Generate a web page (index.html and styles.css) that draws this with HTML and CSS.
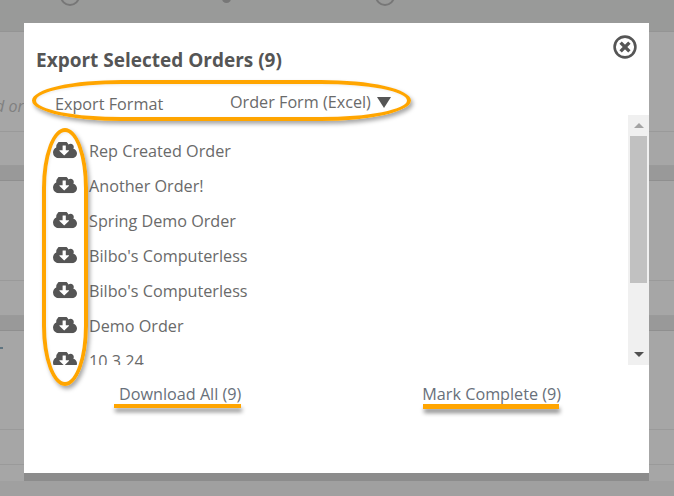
FILE: index.html
```html
<!DOCTYPE html>
<html lang="en">
<head>
<meta charset="utf-8">
<title>Export Selected Orders</title>
<link rel="stylesheet" href="styles.css">
</head>
<body>
<div class="backdrop">
  <div class="bg-top">
    <span class="bg-circle c1"></span>
    <span class="bg-circle c2"></span>
    <span class="bg-circle c3"></span>
  </div>
  <div class="bg-row r1"><span class="bg-note">d or</span></div>
  <div class="bg-row r2"></div>
  <div class="bg-band"></div>
  <div class="bg-row r3"></div>
  <div class="bg-row r4"></div>
  <div class="bg-band"></div>
  <div class="bg-row r5"><span class="bg-tick"></span></div>
  <div class="bg-row r6"></div>
  <div class="bg-row r7"></div>
  <div class="bg-foot"></div>
</div>

<div class="modal">
  <svg class="close" viewBox="0 0 24 24" aria-label="Close">
    <circle cx="12" cy="12" r="10.4" class="close-ring"/>
    <path d="M7.6 7.6l8.800 8.800M16.400 7.600l-8.800 8.800" class="close-x"/>
  </svg>

  <h2 class="title">Export Selected Orders (9)</h2>

  <div class="format">
    <span class="format-label">Export Format</span>
    <span class="format-value">Order Form (Excel)</span>
    <span class="caret"></span>
  </div>

  <div class="list-wrap">
    <ul class="list">
      <li class="item"><svg class="dl" viewBox="0 128 1920 1408"><use href="#cloud"/></svg><span>Rep Created Order</span></li>
      <li class="item"><svg class="dl" viewBox="0 128 1920 1408"><use href="#cloud"/></svg><span>Another Order!</span></li>
      <li class="item"><svg class="dl" viewBox="0 128 1920 1408"><use href="#cloud"/></svg><span>Spring Demo Order</span></li>
      <li class="item"><svg class="dl" viewBox="0 128 1920 1408"><use href="#cloud"/></svg><span>Bilbo's Computerless</span></li>
      <li class="item"><svg class="dl" viewBox="0 128 1920 1408"><use href="#cloud"/></svg><span>Bilbo's Computerless</span></li>
      <li class="item"><svg class="dl" viewBox="0 128 1920 1408"><use href="#cloud"/></svg><span>Demo Order</span></li>
      <li class="item"><svg class="dl" viewBox="0 128 1920 1408"><use href="#cloud"/></svg><span>10.3.24</span></li>
    </ul>
    <div class="scrollbar">
      <div class="arrow-btn"><span class="arrow-up"></span></div>
      <div class="track"><div class="thumb"></div></div>
      <div class="arrow-btn"><span class="arrow-down"></span></div>
    </div>
  </div>

  <div class="actions">
    <a class="action">Download All (9)</a>
    <a class="action">Mark Complete (9)</a>
  </div>

  <span class="mark oval-format"></span>
  <span class="mark oval-icons"></span>
  <span class="mark line-download"></span>
  <span class="mark line-complete"></span>
</div>

<svg class="defs" aria-hidden="true">
  <symbol id="cloud" viewBox="0 128 1920 1408">
    <path d="M1280 928q0-14-9-23t-23-9h-224v-352q0-13-9.500-22.500t-22.500-9.500h-192q-13 0-22.500 9.500t-9.500 22.500v352h-224q-14 0-23 9t-9 23q0 14 9 23l352 352q9 9 23 9t23-9l351-351q10-12 10-24zm640 224q0 159-112.500 271.500t-271.500 112.500h-1088q-185 0-316.500-131.500t-131.500-316.500q0-130 70-240t188-165q-2-30-2-43 0-212 150-362t362-150q156 0 285.500 87t188.500 231q71-62 166-62 106 0 181 75t75 181q0 76-41 138 130 31 213.500 135.500t83.500 238.500z"/>
  </symbol>
</svg>
</body>
</html>
```
FILE: styles.css
```css
* { box-sizing: border-box; }

html, body {
  margin: 0;
  height: 100%;
  overflow: hidden;
}

body {
  position: relative;
  width: 674px;
  height: 496px;
  background: #a5a5a5;
  font-family: "Open Sans", sans-serif;
  color: #555;
}

/* Dimmed page behind the dialog */
.backdrop {
  display: flex;
  flex-direction: column;
  height: 496px;
}

.bg-top {
  position: relative;
  height: 32px;
  flex: none;
  background: #999a99;
  border-bottom: 1px solid #949494;
}

.bg-circle {
  position: absolute;
  top: -14px;
  width: 20px;
  height: 20px;
  border: 2px solid #777;
  border-radius: 50%;
}
.c1 { left: 60px; }
.c2 { left: 222px; top: -6px; width: 9px; height: 9px; border: 0; background: #777; }
.c3 { left: 375px; }

.bg-row {
  flex: none;
  position: relative;
  background: #a6a6a6;
  border-bottom: 1px solid #9a9a9a;
}
.r1 { height: 100px; }
.r2 { height: 34px; }
.r3 { height: 100px; }
.r4 { height: 35px; }
.r5 { height: 99px; }
.r6 { height: 35px; }
.r7 { height: 16px; border-bottom: 0; }

.bg-band {
  flex: none;
  height: 15px;
  background: #999;
  border-bottom: 1px solid #8f8f8f;
}

.bg-note {
  position: absolute;
  left: -5px;
  top: 63px;
  font-size: 16px;
  font-style: italic;
  color: #808080;
}

.bg-tick {
  position: absolute;
  left: 0;
  top: 16px;
  width: 3px;
  height: 2px;
  background: #5f7480;
}

.bg-foot {
  flex: 1;
  background: #a0a0a0;
}

/* Dialog */
.modal {
  position: absolute;
  left: 24px;
  top: 23px;
  width: 625px;
  height: 450px;
  display: flex;
  flex-direction: column;
  background: #fff;
  box-shadow: 0 8px 0 #8c8c8c;
}

.close {
  position: absolute;
  right: 12px;
  top: 12px;
  width: 24px;
  height: 24px;
}
.close-ring { fill: none; stroke: #555; stroke-width: 2.6; }
.close-x { fill: none; stroke: #555; stroke-width: 3.4; }

.title {
  margin: 25px 0 0 12px;
  font-size: 19px;
  line-height: 25px;
  font-weight: 700;
  color: #555;
}

.format {
  display: flex;
  align-items: center;
  margin: 15px 0 0 31px;
  height: 28px;
  font-size: 16.200px;
}

.format-label { width: 175px; padding-top: 3px; color: #6a6a6a; }
.format-value { color: #6a6a6a; }

.caret {
  margin-left: 6px;
  border-left: 7px solid transparent;
  border-right: 7px solid transparent;
  border-top: 11px solid #555;
}

.list-wrap {
  display: flex;
  margin-top: -1px;
  height: 250px;
}

.list {
  flex: 1;
  margin: 0;
  padding: 18px 0 0 29px;
  list-style: none;
  overflow: hidden;
}

.item {
  display: flex;
  align-items: center;
  gap: 12px;
  height: 35px;
  font-size: 16.200px;
  color: #6a6a6a;
}

.dl {
  flex: none;
  width: 24px;
  height: 18px;
  fill: #555;
}

.scrollbar {
  flex: none;
  width: 21px;
  display: flex;
  flex-direction: column;
  background: #f0f0f0;
}

.arrow-btn {
  flex: none;
  height: 21px;
  display: flex;
  align-items: center;
  justify-content: center;
}

.arrow-up {
  border-left: 5px solid transparent;
  border-right: 5px solid transparent;
  border-bottom: 5px solid #a3a3a3;
}

.arrow-down {
  border-left: 5px solid transparent;
  border-right: 5px solid transparent;
  border-top: 5px solid #505050;
}

.track {
  flex: 1;
  padding: 0 2px;
}

.thumb {
  height: 147px;
  background: #c1c1c1;
}

.actions {
  display: flex;
  margin-top: 18px;
  padding-left: 95px;
  font-size: 16.200px;
  line-height: 22px;
}

.action { color: #68707a; white-space: nowrap; }
.action:last-child { margin-left: 181px; }

/* Orange annotations drawn over the dialog */
.mark {
  position: absolute;
  pointer-events: none;
}

.oval-format,
.oval-icons {
  border: 4px solid #ffa500;
  box-shadow: 2px 3px 4px rgba(0, 0, 0, .35), inset 1px 1px 3px rgba(0, 0, 0, .08);
}

.oval-format {
  left: 8px;
  top: 57px;
  width: 379px;
  height: 41px;
  border-radius: 90px / 50%;
}

.oval-icons {
  left: 18px;
  top: 105px;
  width: 46px;
  height: 258px;
  border-radius: 50% / 60px;
}

.line-download,
.line-complete {
  height: 4px;
  top: 381px;
  background: #ffa500;
  box-shadow: 1px 4px 4px rgba(0, 0, 0, .45);
}

.line-download { left: 90px; width: 127px; }
.line-complete { left: 399px; width: 136px; height: 5px; }

.defs { position: absolute; width: 0; height: 0; }
```
